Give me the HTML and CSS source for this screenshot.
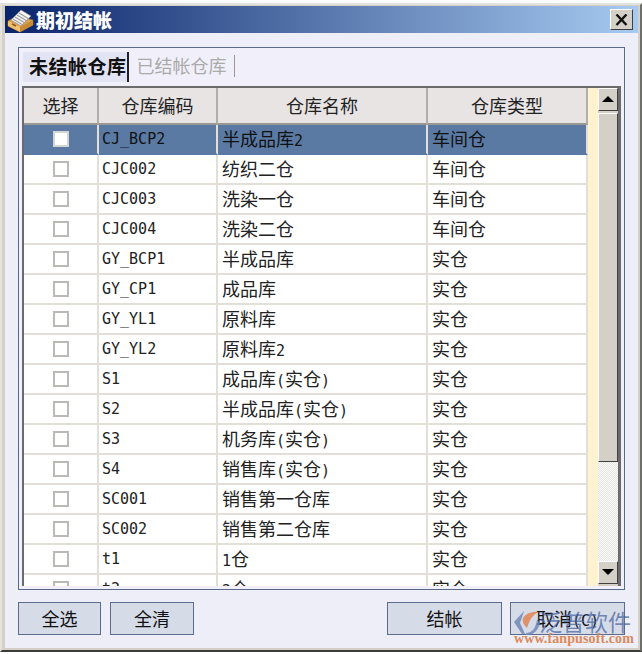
FILE: index.html
```html
<!DOCTYPE html>
<html lang="zh">
<head>
<meta charset="utf-8">
<title>期初结帐</title>
<link rel="stylesheet" href="styles.css">
</head>
<body>
<div class="window">
  <div class="titlebar">
    <svg class="app-icon" width="27" height="26" viewBox="0 0 27 26">
      <path d="M1 14 L10 9 L26 13 L26 18 L13 25 L1 19 Z" fill="#e0a24a" stroke="#9a6a2a" stroke-width="0.7"/>
      <path d="M1 14 L13 20 L13 25 L1 19 Z" fill="#f0c070"/>
      <path d="M13 20 L26 13 L26 18 L13 25 Z" fill="#c98a38"/>
      <path d="M4 13 L14 3 L24 9 L14 19 Z" fill="#f6f6f6" stroke="#8c8c8c" stroke-width="0.7"/>
      <path d="M6 12 L16 18 M8 10 L18 16 M10 8 L20 14 M12 6 L22 12" stroke="#9a9a9a" stroke-width="1.1"/>
      <path d="M5 17 L9 19" stroke="#8a5a20" stroke-width="1.4"/>
    </svg>
    <span class="title">期初结帐</span>
    <button class="close"><svg width="13" height="12" viewBox="0 0 13 12"><path d="M1.5 0.5 L11.5 11 M11.5 0.5 L1.5 11" stroke="#111" stroke-width="2.4"/></svg></button>
  </div>
  <div class="content">
    <div class="panel">
      <div class="tabs">
        <div class="tab active">未结帐仓库</div>
        <div class="tab">已结帐仓库</div>
      </div>
      <div class="grid-wrap">
        <div class="grid">
          <div class="cell head c1">选择</div><div class="cell head c2">仓库编码</div><div class="cell head c3">仓库名称</div><div class="cell head c4">仓库类型</div>
          <div class="row selected"><div class="cell c1"><i class="check"></i></div><div class="cell c2">CJ_BCP2</div><div class="cell c3">半成品库<span class="lat">2</span></div><div class="cell c4">车间仓</div></div>
          <div class="row"><div class="cell c1"><i class="check"></i></div><div class="cell c2">CJC002</div><div class="cell c3">纺织二仓</div><div class="cell c4">车间仓</div></div>
          <div class="row"><div class="cell c1"><i class="check"></i></div><div class="cell c2">CJC003</div><div class="cell c3">洗染一仓</div><div class="cell c4">车间仓</div></div>
          <div class="row"><div class="cell c1"><i class="check"></i></div><div class="cell c2">CJC004</div><div class="cell c3">洗染二仓</div><div class="cell c4">车间仓</div></div>
          <div class="row"><div class="cell c1"><i class="check"></i></div><div class="cell c2">GY_BCP1</div><div class="cell c3">半成品库</div><div class="cell c4">实仓</div></div>
          <div class="row"><div class="cell c1"><i class="check"></i></div><div class="cell c2">GY_CP1</div><div class="cell c3">成品库</div><div class="cell c4">实仓</div></div>
          <div class="row"><div class="cell c1"><i class="check"></i></div><div class="cell c2">GY_YL1</div><div class="cell c3">原料库</div><div class="cell c4">实仓</div></div>
          <div class="row"><div class="cell c1"><i class="check"></i></div><div class="cell c2">GY_YL2</div><div class="cell c3">原料库<span class="lat">2</span></div><div class="cell c4">实仓</div></div>
          <div class="row"><div class="cell c1"><i class="check"></i></div><div class="cell c2">S1</div><div class="cell c3">成品库<span class="lat">(</span>实仓<span class="lat">)</span></div><div class="cell c4">实仓</div></div>
          <div class="row"><div class="cell c1"><i class="check"></i></div><div class="cell c2">S2</div><div class="cell c3">半成品库<span class="lat">(</span>实仓<span class="lat">)</span></div><div class="cell c4">实仓</div></div>
          <div class="row"><div class="cell c1"><i class="check"></i></div><div class="cell c2">S3</div><div class="cell c3">机务库<span class="lat">(</span>实仓<span class="lat">)</span></div><div class="cell c4">实仓</div></div>
          <div class="row"><div class="cell c1"><i class="check"></i></div><div class="cell c2">S4</div><div class="cell c3">销售库<span class="lat">(</span>实仓<span class="lat">)</span></div><div class="cell c4">实仓</div></div>
          <div class="row"><div class="cell c1"><i class="check"></i></div><div class="cell c2">SC001</div><div class="cell c3">销售第一仓库</div><div class="cell c4">实仓</div></div>
          <div class="row"><div class="cell c1"><i class="check"></i></div><div class="cell c2">SC002</div><div class="cell c3">销售第二仓库</div><div class="cell c4">实仓</div></div>
          <div class="row"><div class="cell c1"><i class="check"></i></div><div class="cell c2">t1</div><div class="cell c3"><span class="lat">1</span>仓</div><div class="cell c4">实仓</div></div>
          <div class="row"><div class="cell c1"><i class="check"></i></div><div class="cell c2">t2</div><div class="cell c3"><span class="lat">2</span>仓</div><div class="cell c4">实仓</div></div>
        </div>
        <div class="gutter"></div>
        <div class="scrollbar">
          <div class="arrow"><svg width="14" height="7" viewBox="0 0 14 7"><path d="M7 0 L13 6 L1 6 Z" fill="#000"/></svg></div>
          <div class="thumb"></div>
          <div class="track"></div>
          <div class="arrow"><svg width="14" height="7" viewBox="0 0 14 7"><path d="M1 0 L13 0 L7 6 Z" fill="#000"/></svg></div>
        </div>
      </div>
    </div>
    <div class="buttons">
      <button class="btn small">全选</button>
      <button class="btn small">全清</button>
      <span class="spacer"></span>
      <button class="btn wide">结帐</button>
      <button class="btn wide">取消<span class="lat">(C)</span></button>
    </div>
  </div>
  <div class="watermark">
    <svg class="wm-logo" width="28" height="26" viewBox="0 0 28 26">
      <path d="M11 1 L1 12 L9 24 L12 24 L7 13 Z" fill="#7088b8" opacity="0.85"/>
      <path d="M10 8 C13 3 20 1 26 2 C21 4 17 8 14 18 C11 15 9 12 10 8 Z" fill="#e0916a"/>
      <path d="M13 23 C19 23 23 18 24 9 L27 14 C25 20 20 26 13 25 Z" fill="#7088b8" opacity="0.85"/>
    </svg>
    <span class="wm-cn">泛普软件</span>
    <span class="wm-url">www.fanpusoft.com</span>
  </div>
</div>
</body>
</html>
```
FILE: styles.css
```css
* { box-sizing: border-box; }
html, body { margin: 0; padding: 0; background: #fff; }
body { width: 642px; height: 654px; overflow: hidden; font-family: "Noto Sans CJK SC", sans-serif; padding-top: 3px; }
.window { position: relative; width: 642px; height: 649px; background: #d4d0c8; border: 2px solid #e4e2dc; border-right-color: #6e6e6a; border-bottom-color: #3c3c3c; padding: 1px 2px 2px 3px; display: flex; flex-direction: column; }
.titlebar { flex: none; height: 27px; display: flex; align-items: center; padding: 0 5px 0 2px; background: linear-gradient(90deg, #0a246a, #a6caf0); }
.app-icon { flex: none; margin-right: 2px; }
.title { font-weight: 900; font-size: 19px; color: #fff; line-height: 1; }
.close { margin-left: auto; width: 23px; height: 21px; padding: 0; display: flex; align-items: center; justify-content: center; background: #d4d0c8; border: 1px solid; border-color: #fff #404040 #404040 #fff; }
.content { flex: 1; background: #eeeef8; padding: 14px 13px 0 13px; display: flex; flex-direction: column; min-height: 0; }
.panel { flex: none; height: 543px; border: 1px solid #5b6a8c; padding: 0 3px 3px 3px; display: flex; flex-direction: column; background: #f1f0fa; }
.tabs { flex: none; height: 38px; display: flex; align-items: flex-start; padding-top: 4px; }
.tab { height: 30px; line-height: 27px; padding: 0 8px; font-size: 18px; color: #aaa; position: relative; }
.tab::after { content: ""; position: absolute; right: 0; top: 3px; height: 22px; width: 1px; background: #999; }
.tab.active { font-weight: 700; font-size: 19px; letter-spacing: 0.5px; color: #111; background: #e2e3f3; padding: 0 2px 0 6px; margin-left: 1px; }
.tab.active::after { top: 0; height: 30px; width: 2px; background: #222; }
.grid-wrap { flex: 1; min-height: 0; display: flex; overflow: hidden; border: 2px solid #6b6b6b; border-bottom: 0; border-right: 3px solid #6b6b6b; background: #fff; }
.grid { width: 564px; flex: none; display: flex; flex-wrap: wrap; align-content: flex-start; overflow: hidden; }
.row { width: 100%; height: 30px; display: flex; flex: none; background: #fff; }
.cell { height: 30px; flex: none; padding-left: 3px; font-size: 15px; line-height: 28px; color: #222; border-right: 2px solid #e2ded8; border-bottom: 2px solid #e2ded8; font-family: "DejaVu Sans Mono", "Noto Sans CJK SC", monospace; white-space: pre; }
.c1 { width: 75px; display: flex; align-items: center; justify-content: center; padding: 0; }
.c2 { width: 119px; }
.c3 { width: 210px; padding-left: 4px; font-size: 18px; line-height: 26px; font-family: "Noto Sans CJK SC", sans-serif; }
.c4 { width: 160px; padding-left: 4px; font-size: 18px; line-height: 26px; font-family: "Noto Sans CJK SC", sans-serif; }
.lat { font-family: "DejaVu Sans Mono", monospace; font-size: 15px; }
.cell.head { height: 37px; display: flex; align-items: center; justify-content: center; padding: 0 0 2px; color: #222; background: #e8e4e4; font-family: "Noto Sans CJK SC", sans-serif; font-size: 18px; border-right: 2px solid #b0aeaa; border-bottom: 2px solid #9a9894; }
.selected { background: #5a7aa4; }
.selected .cell { background: #5a7aa4; border-color: #5a7aa4; color: #111; border-right-color: #e2ded8; }
.check { display: block; width: 16px; height: 16px; border: 2px solid #bcbab6; background: #fff; }
.selected .check { border-color: #d4d4d4; }
.gutter { flex: none; width: 10px; background: #fff2cf; }
.scrollbar { flex: 1; display: flex; flex-direction: column; background: #d4d0c8; padding-bottom: 2px; }
.arrow { flex: none; height: 23px; display: flex; align-items: center; justify-content: center; background: #d4d0c8; border: 1px solid; border-color: #fff #404040 #404040 #fff; }
.thumb { flex: none; height: 349px; background: #d4d0c8; border: 1px solid; border-color: #fff #404040 #404040 #fff; margin-top: 2px; }
.track { flex: 1; background: repeating-conic-gradient(#e8e6e0 0 25%, #fafafa 0 50%) 0 0 / 2px 2px; }
.buttons { flex: none; display: flex; gap: 8px; margin-top: 12px; }
.spacer { flex: 1; }
.btn { height: 33px; font-family: "Noto Sans CJK SC", sans-serif; font-size: 18px; color: #111; background: #d6dbe8; border: 1px solid #5c6c8e; padding: 0 0 2px; }
.small { width: 83px; }
.small + .small { width: 84px; margin-left: 1px; }
.wide { width: 115px; }
.watermark { position: absolute; left: 508px; top: 603px; width: 132px; height: 44px; }
.wm-logo { position: absolute; left: 3px; top: 2px; }
.wm-cn { position: absolute; left: 29px; top: -1px; font-size: 23px; line-height: 28px; color: rgba(70, 100, 160, 0.72); white-space: nowrap; }
.wm-url { position: absolute; left: 4px; top: 24px; font-family: "Liberation Serif", serif; font-size: 14px; font-weight: 700; letter-spacing: 0.1px; line-height: 14px; color: #d98a5c; white-space: nowrap; }
```
